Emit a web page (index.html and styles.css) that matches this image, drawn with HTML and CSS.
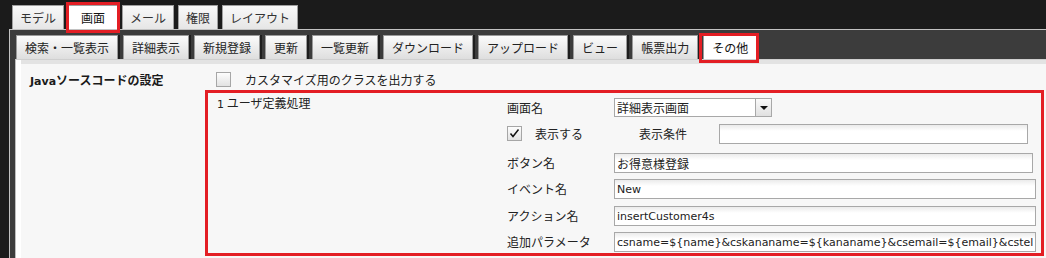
FILE: index.html
```html
<!DOCTYPE html>
<html lang="ja">
<head>
<meta charset="utf-8">
<title>画面設定</title>
<link rel="stylesheet" href="styles.css">
</head>
<body>
<div class="app">
  <nav class="tabs-main">
    <div class="tab">モデル</div>
    <div class="tab tab-active marked-top">画面</div>
    <div class="tab">メール</div>
    <div class="tab">権限</div>
    <div class="tab">レイアウト</div>
  </nav>
  <div class="frame">
    <nav class="tabs-sub">
      <div class="stab">検索・一覧表示</div>
      <div class="stab">詳細表示</div>
      <div class="stab">新規登録</div>
      <div class="stab">更新</div>
      <div class="stab">一覧更新</div>
      <div class="stab">ダウンロード</div>
      <div class="stab">アップロード</div>
      <div class="stab">ビュー</div>
      <div class="stab">帳票出力</div>
      <div class="stab stab-active marked-sub">その他</div>
    </nav>
    <div class="content">
      <div class="sheet">
        <div class="setting">
          <div class="setting-label"><span class="latin-b">Java</span>ソースコードの設定</div>
          <div class="setting-body">
            <div class="check-row">
              <span class="checkbox"></span>
              <span>カスタマイズ用のクラスを出力する</span>
            </div>
            <div class="handler">
              <div class="handler-title"><span class="latin">1</span> ユーザ定義処理</div>
              <div class="form">
                <div class="f-label">画面名</div>
                <div class="f-field">
                  <div class="select">
                    <span class="select-text">詳細表示画面</span>
                    <span class="select-btn"><span class="caret"></span></span>
                  </div>
                </div>

                <div class="f-row-show">
                  <span class="checkbox checked">
                    <svg width="13" height="13" viewBox="0 0 13 13"><path d="M2.5 6.5 L5 9.5 L10.5 2.5" fill="none" stroke="#111" stroke-width="1.5"/></svg>
                  </span>
                  <span class="show-label">表示する</span>
                  <span class="cond-label">表示条件</span>
                  <input class="text-input cond-input" type="text" value="" readonly>
                </div>

                <div class="f-label">ボタン名</div>
                <div class="f-field"><input class="text-input text-ja btn-input" type="text" value="お得意様登録" readonly></div>

                <div class="f-label">イベント名</div>
                <div class="f-field"><input class="text-input" type="text" value="New" readonly></div>

                <div class="f-label">アクション名</div>
                <div class="f-field"><input class="text-input" type="text" value="insertCustomer4s" readonly></div>

                <div class="f-label">追加パラメータ</div>
                <div class="f-field"><input class="text-input" type="text" value="csname=${name}&amp;cskananame=${kananame}&amp;csemail=${email}&amp;cstel=${tel}" readonly></div>
              </div>
            </div>
          </div>
        </div>
      </div>
    </div>
  </div>
</div>
</body>
</html>
```

FILE: styles.css
```css
* {
  box-sizing: border-box;
}

html, body {
  margin: 0;
  padding: 0;
}

body {
  width: 1046px;
  height: 258px;
  overflow: hidden;
  background: #1b1b1b;
  font-family: "Noto Sans CJK JP", "DejaVu Sans", sans-serif;
  font-size: 12px;
  color: #222;
}

.latin {
  font-family: "DejaVu Sans", "Noto Sans CJK JP", sans-serif;
  font-size: 11px;
}

.latin-b {
  font-family: "DejaVu Sans", "Noto Sans CJK JP", sans-serif;
  font-size: 11px;
  font-weight: bold;
}

.app {
  display: flex;
  flex-direction: column;
  height: 258px;
}

/* top level tabs */
.tabs-main {
  display: flex;
  gap: 4px;
  padding: 5px 0 0 12px;
  height: 29px;
}

.tab {
  position: relative;
  height: 24px;
  line-height: 23px;
  padding: 0 7px;
  background: linear-gradient(#f9f9f9, #e6e6e6);
  border: 1px solid #a0a0a0;
  border-bottom: none;
  color: #333;
}

.tab-active {
  background: #ffffff;
  padding: 0 12px;
  color: #111;
}

.marked-top::after {
  content: "";
  position: absolute;
  left: -3px;
  right: -3px;
  top: -4px;
  bottom: -4px;
  border: 3px solid #e31e24;
}

/* frame */
.frame {
  flex: 1;
  margin-left: 9px;
  border-top: 1px solid #c2c2c2;
  border-left: 1px solid #c2c2c2;
  background: #3c3c3c;
  padding-left: 5px;
  display: flex;
  flex-direction: column;
}

.tabs-sub {
  display: flex;
  gap: 5px;
  padding: 5px 0 0 1px;
  height: 29px;
}

.stab {
  position: relative;
  height: 24px;
  line-height: 23px;
  padding: 0 8px;
  background: linear-gradient(#fbfbfb, #dedede);
  border: 1px solid #9a9a9a;
  border-bottom: none;
  box-shadow: 2px 0 0 #1e1e1e;
  color: #222;
}

.stab-active {
  background: #ffffff;
  color: #111;
}

.marked-sub::after {
  content: "";
  position: absolute;
  left: -5px;
  right: -3px;
  top: -3px;
  bottom: -4px;
  border: 3px solid #e31e24;
}

.content {
  flex: 1;
  border-top: 1px solid #cfcfcf;
  border-left: 1px solid #bdbdbd;
  background: #ffffff;
  padding-left: 5px;
  display: flex;
}

.sheet {
  flex: 1;
  background: #f7f7f7;
  border-top: 4px solid #e3e3e3;
}

.setting {
  display: flex;
  padding-top: 8px;
}

.setting-label {
  width: 184px;
  padding-left: 9px;
  font-weight: bold;
  line-height: 15px;
  color: #1a1a1a;
}

.setting-body {
  display: flex;
  flex-direction: column;
}

.check-row {
  display: flex;
  align-items: center;
  gap: 14px;
  padding-left: 11px;
  height: 15px;
  line-height: 15px;
}

.checkbox {
  width: 15px;
  height: 15px;
  flex: none;
  border: 1px solid #a6a6a6;
  background: linear-gradient(#fdfdfd, #e2e2e2);
  display: flex;
  align-items: center;
  justify-content: center;
}

.handler {
  margin-top: 3px;
  width: 839px;
  height: 166px;
  border: 3px solid #e31e24;
  display: flex;
}

.handler-title {
  width: 299px;
  padding: 1px 0 0 9px;
  line-height: 18px;
}

.form {
  flex: 1;
  display: grid;
  grid-template-columns: 107px 1fr;
  grid-template-rows: 26px 29px 26px 27px 26px 20px;
  padding: 5px 5px 0 0;
}

.f-label {
  line-height: 20px;
  height: 20px;
  white-space: nowrap;
}

.f-field {
  display: flex;
}

.select {
  width: 158px;
  height: 19px;
  border: 1px solid #a8a8a8;
  background: #ffffff;
  display: flex;
}

.select-text {
  flex: 1;
  padding-left: 2px;
  line-height: 17px;
}

.select-btn {
  width: 16px;
  border-left: 1px solid #a8a8a8;
  background: linear-gradient(#fafafa, #e0e0e0);
  display: flex;
  align-items: center;
  justify-content: center;
}

.caret {
  width: 0;
  height: 0;
  border-left: 4px solid transparent;
  border-right: 4px solid transparent;
  border-top: 4px solid #111;
}

.f-row-show {
  grid-column: 1 / 3;
  display: flex;
  align-items: flex-start;
}

.f-row-show .checkbox {
  margin-top: 2px;
}

.show-label {
  width: 104px;
  margin-left: 13px;
  line-height: 19px;
}

.cond-label {
  width: 80px;
  line-height: 19px;
}

.text-input {
  flex: 1;
  min-width: 0;
  height: 20px;
  margin: 0;
  padding: 0 2px;
  border: 1px solid #a8a8a8;
  background: linear-gradient(#ebebeb, #ffffff 6px);
  font-family: "DejaVu Sans", "Noto Sans CJK JP", sans-serif;
  font-size: 11px;
  color: #222;
  outline: none;
}

.text-ja {
  font-family: "Noto Sans CJK JP", sans-serif;
  font-size: 12px;
}

.cond-input {
  margin-right: 8px;
}

.btn-input {
  margin-right: 3px;
}
```
